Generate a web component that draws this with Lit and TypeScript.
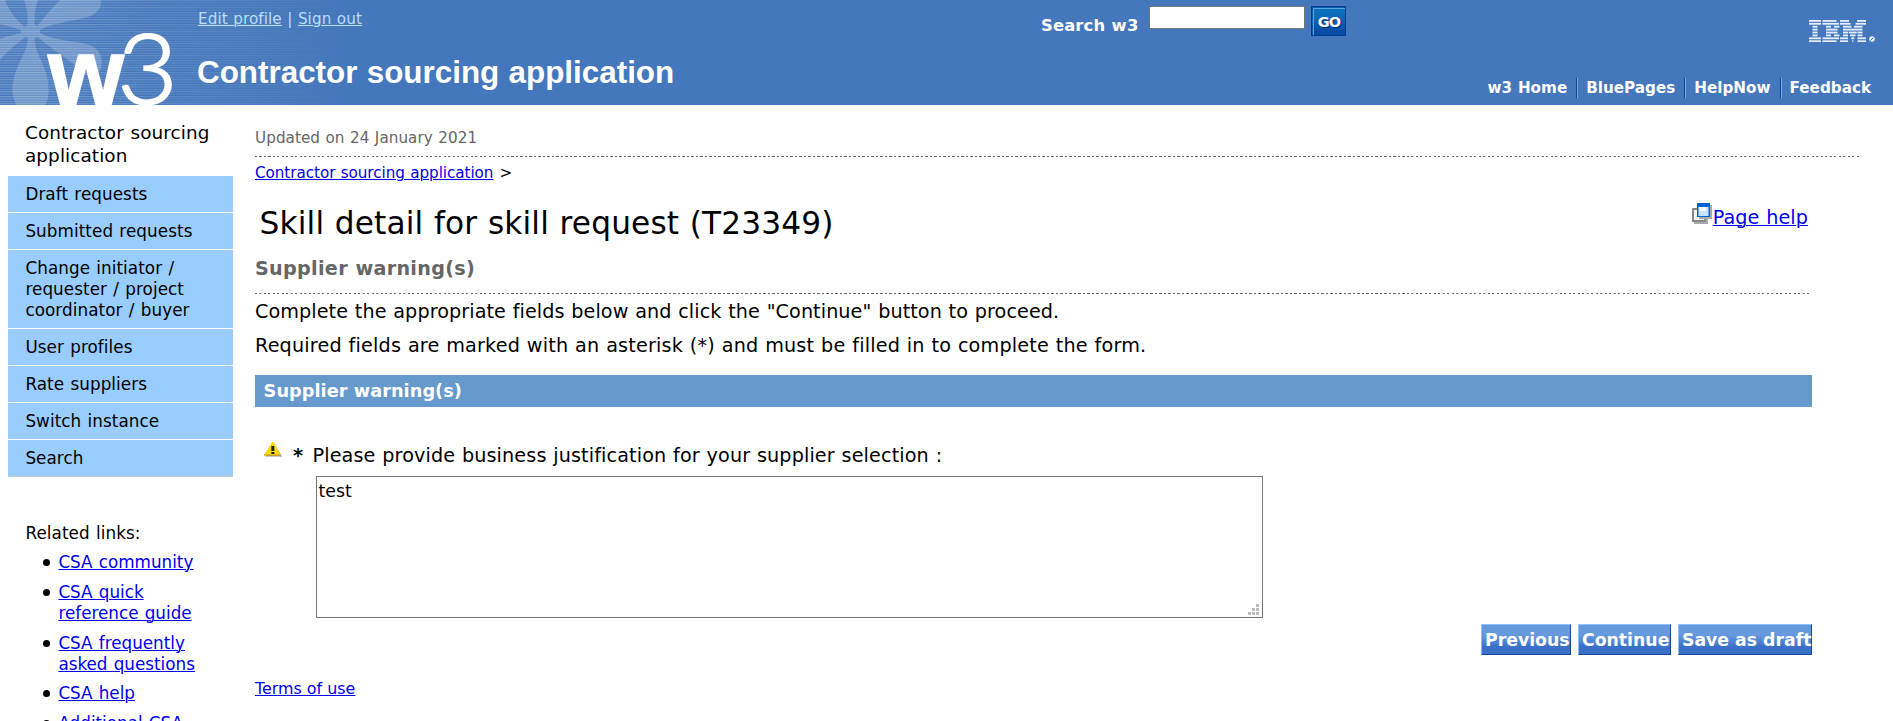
import { LitElement, html, css, svg } from "lit";
import { customElement, state } from "lit/decorators.js";

const NAV = [
  "Draft requests",
  "Submitted requests",
  "Change initiator / requester / project coordinator / buyer",
  "User profiles",
  "Rate suppliers",
  "Switch instance",
  "Search",
];

const RELATED = [
  "CSA community",
  "CSA quick reference guide",
  "CSA frequently asked questions",
  "CSA help",
  "Additional CSA information",
];

const TOOLS = ["w3 Home", "BluePages", "HelpNow", "Feedback"];

/* Horizontal bars of the corporate mark, one entry per row: [x, width] pairs. */
const MARK_ROWS: number[][][] = [
  [[0, 12], [13.5, 14], [31, 9], [48, 9]],
  [[0, 12], [13.5, 16.5], [31, 10.5], [46.5, 10.5]],
  [[3.5, 5], [17, 5], [25, 5.5], [34, 8.5], [45, 8.5]],
  [[3.5, 5], [17, 11.5], [34, 19.5]],
  [[3.5, 5], [17, 11.5], [34, 5], [39.8, 8], [48.5, 5]],
  [[3.5, 5], [17, 5], [25, 5.5], [34, 5], [41, 5.5], [48.5, 5]],
  [[0, 12], [13.5, 16.5], [31, 8], [42.3, 3], [48.5, 8.5]],
  [[0, 12], [13.5, 14], [31, 8], [43.3, 1], [48.5, 8.5]],
];

@customElement("w3-header")
class W3Header extends LitElement {
  static styles = css`
    :host {
      display: block;
      height: 105px;
      background: #4477bb;
      color: #fff;
      font-family: "DejaVu Sans", sans-serif;
      overflow: hidden;
    }
    .bar { display: flex; height: 105px; }
    .brand { width: 197px; flex: none; }
    .art { display: block; }
    .titles { width: 844px; flex: none; padding-top: 9px; box-sizing: border-box; }
    .user { font-size: 15.2px; line-height: 20px; word-spacing: 0.034em; letter-spacing: 0.09px; color: #bbddff; padding-left: 1px; white-space: nowrap; }
    .user a { color: #bbddff; text-decoration-thickness: 1px; }
    .app { margin: 26px 0 0; font: bold 31.4px/36px "Liberation Sans", Arial, sans-serif; white-space: nowrap; }
    .search { display: flex; align-items: flex-start; padding-top: 6px; flex: 1; }
    .label { font-weight: bold; font-size: 16.4px; line-height: 20px; padding-top: 9.5px; width: 108px; letter-spacing: 0.13px; white-space: nowrap; }
    .field { width: 156px; height: 23px; box-sizing: border-box; border: 1px solid #767676; padding: 0; margin: 0 6px 0 0; background: #fff; border-radius: 0; }
    .go {
      width: 35px; height: 30px; box-sizing: border-box; padding: 2px 0 0 1px; border: 1px solid #003c8c; border-radius: 0;
      color: #fff; background: linear-gradient(#0d6fbe 20%, #0747a0);
      box-shadow: inset 1px 1px 0 #0e5cb0, inset 2px 2px 0 #5ba3dd;
      font: bold 14.500px/26px "DejaVu Sans", sans-serif; letter-spacing: -0.8px; text-shadow: 1px 1px 0 #003070;
    }
    .right { display: flex; flex-direction: column; align-items: flex-end; justify-content: space-between; padding: 20px 22px 7px 0; }
    .mark { display: block; margin-right: -5px; }
    .tools { display: flex; font-weight: bold; font-size: 15.2px; line-height: 20px; }
    .tool { padding: 0 9px 0 8px; border-left: 1px solid #77aaee; box-shadow: -1px 0 0 #114488; margin-left: 1px; height: 20px; white-space: nowrap; }
    .tool:first-child { border: 0; box-shadow: none; }
    .tool:last-child { padding-right: 0; }
  `;

  private art() {
    return html`<svg class="art" width="420" height="105" viewBox="0 0 420 105">
      <defs>
        <pattern id="lines" width="10" height="2.4" patternUnits="userSpaceOnUse">
          <rect width="10" height="1.1" fill="#fff" fill-opacity=".26"></rect>
        </pattern>
        <linearGradient id="fade"><stop offset=".12" stop-color="#fff"></stop><stop offset=".85" stop-color="#000"></stop></linearGradient>
        <mask id="m"><rect width="420" height="105" fill="url(#fade)"></rect></mask>
      </defs>
      <rect width="420" height="105" fill="url(#lines)" mask="url(#m)"></rect>
      <path fill="#fff" fill-opacity=".2" d="M28 38 C27 55 12 68 12.500 92 C13 98 15 103 17 106 H44 C48 101 49 95 48.500 88 C48 66 35 56 34.500 38
        L38 37 C52 50 68 58 80 70 C88 78 98 78 101 68 C104 58 99 47 87 44 C74 41 52 40 40 33
        V30 C50 24 66 22 84 18 C97 15 102 8 101 0 H60 C52 8 44 18 37 26 L34.500 25 C34.500 15 35 8 38 0 H24 C27 8 28 15 27.500 25
        L24 27 C16 19 9 11 5 0 H0 V24 C8 26 15 28 21 30 V33 C14 35 7 36 0 39 V60 C8 50 17 44 25 37 Z"></path>
      <g fill="#fff" stroke="#fff">
        <text x="48" y="106" font-family="Liberation Sans, Arial, sans-serif" font-weight="bold" font-size="96" stroke-width="1.500" textLength="76" lengthAdjust="spacingAndGlyphs">w</text>
        <text x="117.500" y="103.500" font-family="Lato, sans-serif" font-weight="300" font-size="97" stroke-width="2.200" textLength="60" lengthAdjust="spacingAndGlyphs">3</text>
      </g>
    </svg>`;
  }

  private mark() {
    return html`<svg class="mark" width="67" height="22" viewBox="0 0 67 22" fill="#e6eefb">
      ${MARK_ROWS.map((row, i) =>
        row.map(([x, w]) => svg`<rect x=${x} y=${i * 2.9} width=${w} height="1.8"></rect>`)
      )}
      <circle cx="63" cy="19" r="2.800"></circle>
      <path d="M61.500 20.500 L64.500 17.500" stroke="#4477bb" stroke-width="1"></path>
    </svg>`;
  }

  render() {
    return html`<div class="bar">
      <div class="brand">${this.art()}</div>
      <div class="titles">
        <div class="user"><a href="#">Edit profile</a> | <a href="#">Sign out</a></div>
        <h1 class="app">Contractor sourcing application</h1>
      </div>
      <div class="search">
        <span class="label">Search w3</span>
        <input class="field" aria-label="Search w3" />
        <button class="go">GO</button>
      </div>
      <div class="right">
        ${this.mark()}
        <nav class="tools">${TOOLS.map((t) => html`<div class="tool">${t}</div>`)}</nav>
      </div>
    </div>`;
  }
}

@customElement("side-nav")
class SideNav extends LitElement {
  static styles = css`
    :host { display: block; width: 225px; font-family: "DejaVu Sans", sans-serif; font-size: 16.8px; line-height: 21px; word-spacing: 0.05em; color: #000; }
    .title { font-size: 18.4px; line-height: 23px; padding: 16px 12px 9px 17px; letter-spacing: 0.09px; }
    .items { border-bottom: 1px solid #c4ccd4; }
    .item { background: #99ccff; padding: 8px 20px 7px 17.4px; border-bottom: 1px solid #fff; letter-spacing: 0.07px; }
    .item:last-child { border-bottom: 0; }
    .heading { padding: 46px 0 0 17.4px; letter-spacing: 0.08px; }
    .links { margin: 8px 0 0; padding: 0 30px 0 50.4px; list-style: none; }
    .link { margin-bottom: 8.8px; }
    .link::before { content: ""; float: left; width: 7px; height: 7px; margin: 7px 0 0 -15.500px; border-radius: 50%; background: #000; }
    a { color: #0000ee; text-decoration-thickness: 1px; }
  `;
  render() {
    return html`<div class="title">Contractor sourcing application</div>
      <div class="items">${NAV.map((n) => html`<div class="item">${n}</div>`)}</div>
      <div class="heading">Related links:</div>
      <ul class="links">${RELATED.map((n) => html`<li class="link"><a href="#">${n}</a></li>`)}</ul>`;
  }
}

@customElement("app-root")
class AppRoot extends LitElement {
  static styles = css`
    :host { display: block; height: 721px; overflow: hidden; background: #fff; color: #000; font-family: "DejaVu Sans", sans-serif; word-spacing: 0.034em; }
    .page { display: flex; }
    .side { flex: none; margin: 0 22px 0 8px; }
    .main { width: 1604px; }
    .updated { font-size: 15.2px; line-height: 20px; color: #666; padding-top: 23px; letter-spacing: 0.06px; }
    .rule { height: 1px; background: repeating-linear-gradient(90deg, #666 0 2px, #fff 2px 4.500px); }
    .top { margin-top: 8px; }
    .crumbs { font-size: 15.2px; line-height: 20px; margin-top: 6px; letter-spacing: -0.05px; }
    .crumbs a { margin-right: 6px; }
    .body { width: 1557px; }
    .head { display: flex; justify-content: space-between; height: 63px; }
    .name { font-weight: normal; font-size: 31.2px; line-height: 40px; margin: 20px 0 0 4.6px; letter-spacing: 0.15px; }
    .help { display: flex; align-items: flex-start; font-size: 19.2px; line-height: 24px; padding: 20px 4px 0 0; }
    .help a { margin-top: 3px; letter-spacing: 0.08px; }
    .sub { font-size: 19.2px; line-height: 26px; color: #666; margin: 10px 0 0; letter-spacing: 0.29px; }
    .second { width: 1555px; margin-top: 11px; }
    .copy { font-size: 19.2px; line-height: 24px; margin: 0; padding-top: 6px; letter-spacing: 0.08px; }
    .req { padding-top: 10px; letter-spacing: 0.175px; }
    .section { background: #6699cc; color: #fff; font-size: 17.7px; font-weight: bold; line-height: 33px; height: 32px; padding-left: 8.6px; margin-top: 17px; word-spacing: 0; letter-spacing: 0.06px; }
    .ask { display: flex; align-items: flex-start; font-size: 19.2px; line-height: 24px; padding: 35px 0 0 9px; height: 34px; letter-spacing: 0.12px; }
    .warn { flex: none; width: 29px; display: flex; }
    .star { font-weight: bold; width: 19.5px; padding-top: 2px; }
    .q { padding-top: 2px; }
    .box { display: block; width: 947px; height: 142px; box-sizing: border-box; margin: 0 0 0 61px; padding: 3px 2px 3px 1.5px; border: 1px solid #767676; border-radius: 0; resize: none; font: 17.3px/22px "DejaVu Sans", sans-serif; color: #000; outline: 0; }
    .wrap { display: grid; width: 1008px; }
    .wrap > * { grid-area: 1 / 1; }
    .grip { align-self: end; justify-self: end; margin: 0 4px 3px 0; }
    .actions { display: flex; justify-content: flex-end; gap: 7px; margin-top: 6px; }
    .btn { height: 31px; box-sizing: border-box; padding: 1px 0 0 3px; text-align: left; color: #fff; white-space: nowrap; font: bold 17.3px/27px "DejaVu Sans", sans-serif; border: 1px solid; border-color: #88c4ff #114d99 #114d99 #88c4ff; border-radius: 0; background: linear-gradient(#6699dd 35%, #3a70c8 75%); }
    .prev { width: 90px; }
    .next { width: 93px; }
    .save { width: 134px; }
    .terms { font-size: 15.9px; line-height: 20px; margin-top: 24px; word-spacing: 0; }
    a { color: #0000ee; text-decoration-thickness: 1px; }
  `;

  @state() private text = "test";

  render() {
    return html`<w3-header></w3-header>
      <div class="page">
        <side-nav class="side"></side-nav>
        <div class="main">
          <div class="updated">Updated on 24 January 2021</div>
          <div class="rule top"></div>
          <div class="crumbs"><a href="#">Contractor sourcing application</a>&gt;</div>
          <div class="body">
            <div class="head">
              <h1 class="name">Skill detail for skill request (T23349)</h1>
              <div class="help">
                <svg width="21" height="21" viewBox="0 0 21 21">
                  <rect x="2" y="7" width="14" height="14" fill="#aaa"></rect>
                  <rect x="1" y="6" width="12" height="12" fill="#f2f2f2" stroke="#888" stroke-width="2"></rect>
                  <rect x="7" y="2" width="13" height="14" fill="#aaa"></rect>
                  <rect x="5" y="0" width="13" height="14" fill="#0066cc"></rect>
                  <rect x="6.500" y="4" width="10" height="9" fill="#cfe4fb"></rect>
                  <rect x="7" y="4" width="7" height="4" fill="#f4f9ff"></rect>
                </svg>
                <a href="#">Page help</a>
              </div>
            </div>
            <h2 class="sub">Supplier warning(s)</h2>
            <div class="rule second"></div>
            <p class="copy">Complete the appropriate fields below and click the "Continue" button to proceed.</p>
            <p class="copy req">Required fields are marked with an asterisk (*) and must be filled in to complete the form.</p>
            <div class="section">Supplier warning(s)</div>
            <div class="ask">
              <span class="warn"><svg width="18" height="15" viewBox="0 0 18 15">
                <path d="M9.500 .5 L18 14.500 H1 Z" fill="#9a9a86"></path>
                <path d="M8.800 0 Q9.500 0 10 1 L16.500 13 H0 L7.500 1 Q8 0 8.800 0 Z" fill="#ffd800"></path>
                <path d="M0 13 H16.500" stroke="#d8a800" stroke-width="1.200"></path>
                <rect x="7.300" y="4" width="3" height="5" fill="#222"></rect>
                <rect x="7.300" y="10" width="3" height="2" fill="#222"></rect>
              </svg></span>
              <span class="star">*</span>
              <span class="q">Please provide business justification for your supplier selection&nbsp;:</span>
            </div>
            <div class="wrap">
              <textarea class="box" .value=${this.text} spellcheck="false"></textarea>
              <svg class="grip" width="11" height="11" viewBox="0 0 11 11" fill="#bbb">
                <path d="M8 0h3v3h-3z M4 4h3v3h-3z M8 4h3v3h-3z M0 8h3v3h-3z M4 8h3v3h-3z M8 8h3v3h-3z"></path>
              </svg>
            </div>
            <div class="actions">
              <button class="btn prev">Previous</button>
              <button class="btn next">Continue</button>
              <button class="btn save">Save as draft</button>
            </div>
            <div class="terms"><a href="#">Terms of use</a></div>
          </div>
        </div>
      </div>`;
  }
}
